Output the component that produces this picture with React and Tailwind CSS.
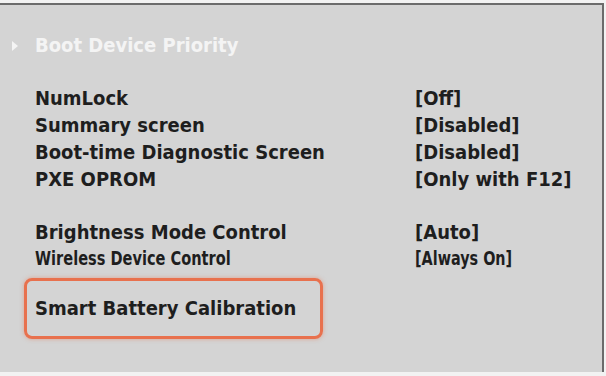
import React from "react";

const rows = [
  { label: "NumLock", value: "[Off]" },
  { label: "Summary screen", value: "[Disabled]" },
  { label: "Boot-time Diagnostic Screen", value: "[Disabled]" },
  { label: "PXE OPROM", value: "[Only with F12]" },
];

const App = () => {
  return (
    <div
      className="w-[606px] h-[376px] bg-[#f2f2f2] overflow-hidden"
      style={{ fontFamily: '"DejaVu Sans Condensed", "DejaVu Sans", sans-serif' }}
    >
      <div className="mt-[3px] w-[604px] h-[369px] bg-[#d4d4d4] border-t-2 border-r-2 border-[#6b6b6b] pt-[27px] font-bold text-[20px] leading-[27px] text-[#1e1e1e]">
        {/* Menu header */}
        <div className="flex items-center pl-[12px] text-[#f4f4f4]">
          <svg width="23" height="10" viewBox="0 0 23 10" className="shrink-0">
            <path d="M0 0 L6 5 L0 10 Z" fill="#f4f4f4" />
          </svg>
          <span className="font-semibold">Boot Device Priority</span>
        </div>

        {/* Settings */}
        <div className="mt-[26px] pl-[35px]">
          {rows.map((r) => (
            <div key={r.label} className="flex">
              <span className="w-[380px]">{r.label}</span>
              <span>{r.value}</span>
            </div>
          ))}
        </div>

        <div className="mt-[26px] pl-[35px]">
          <div className="flex">
            <span className="w-[380px]">Brightness Mode Control</span>
            <span>[Auto]</span>
          </div>
          <div className="flex leading-[25px]">
            <span className="w-[380px]">
              <span className="inline-block origin-left scale-x-[0.81] whitespace-nowrap">Wireless Device Control</span>
            </span>
            <span className="inline-block origin-left scale-x-[0.8] whitespace-nowrap">[Always On]</span>
          </div>
        </div>

        {/* Highlighted item */}
        <div className="mt-[7px] ml-[24px] w-[299px] h-[61px] border-[3px] border-[#e8714e] rounded-[8px] shadow-[0_0_4px_rgba(232,113,78,0.5)] flex items-center pl-[8px]">
          <span>Smart Battery Calibration</span>
        </div>
      </div>
    </div>
  );
};

export default App;
